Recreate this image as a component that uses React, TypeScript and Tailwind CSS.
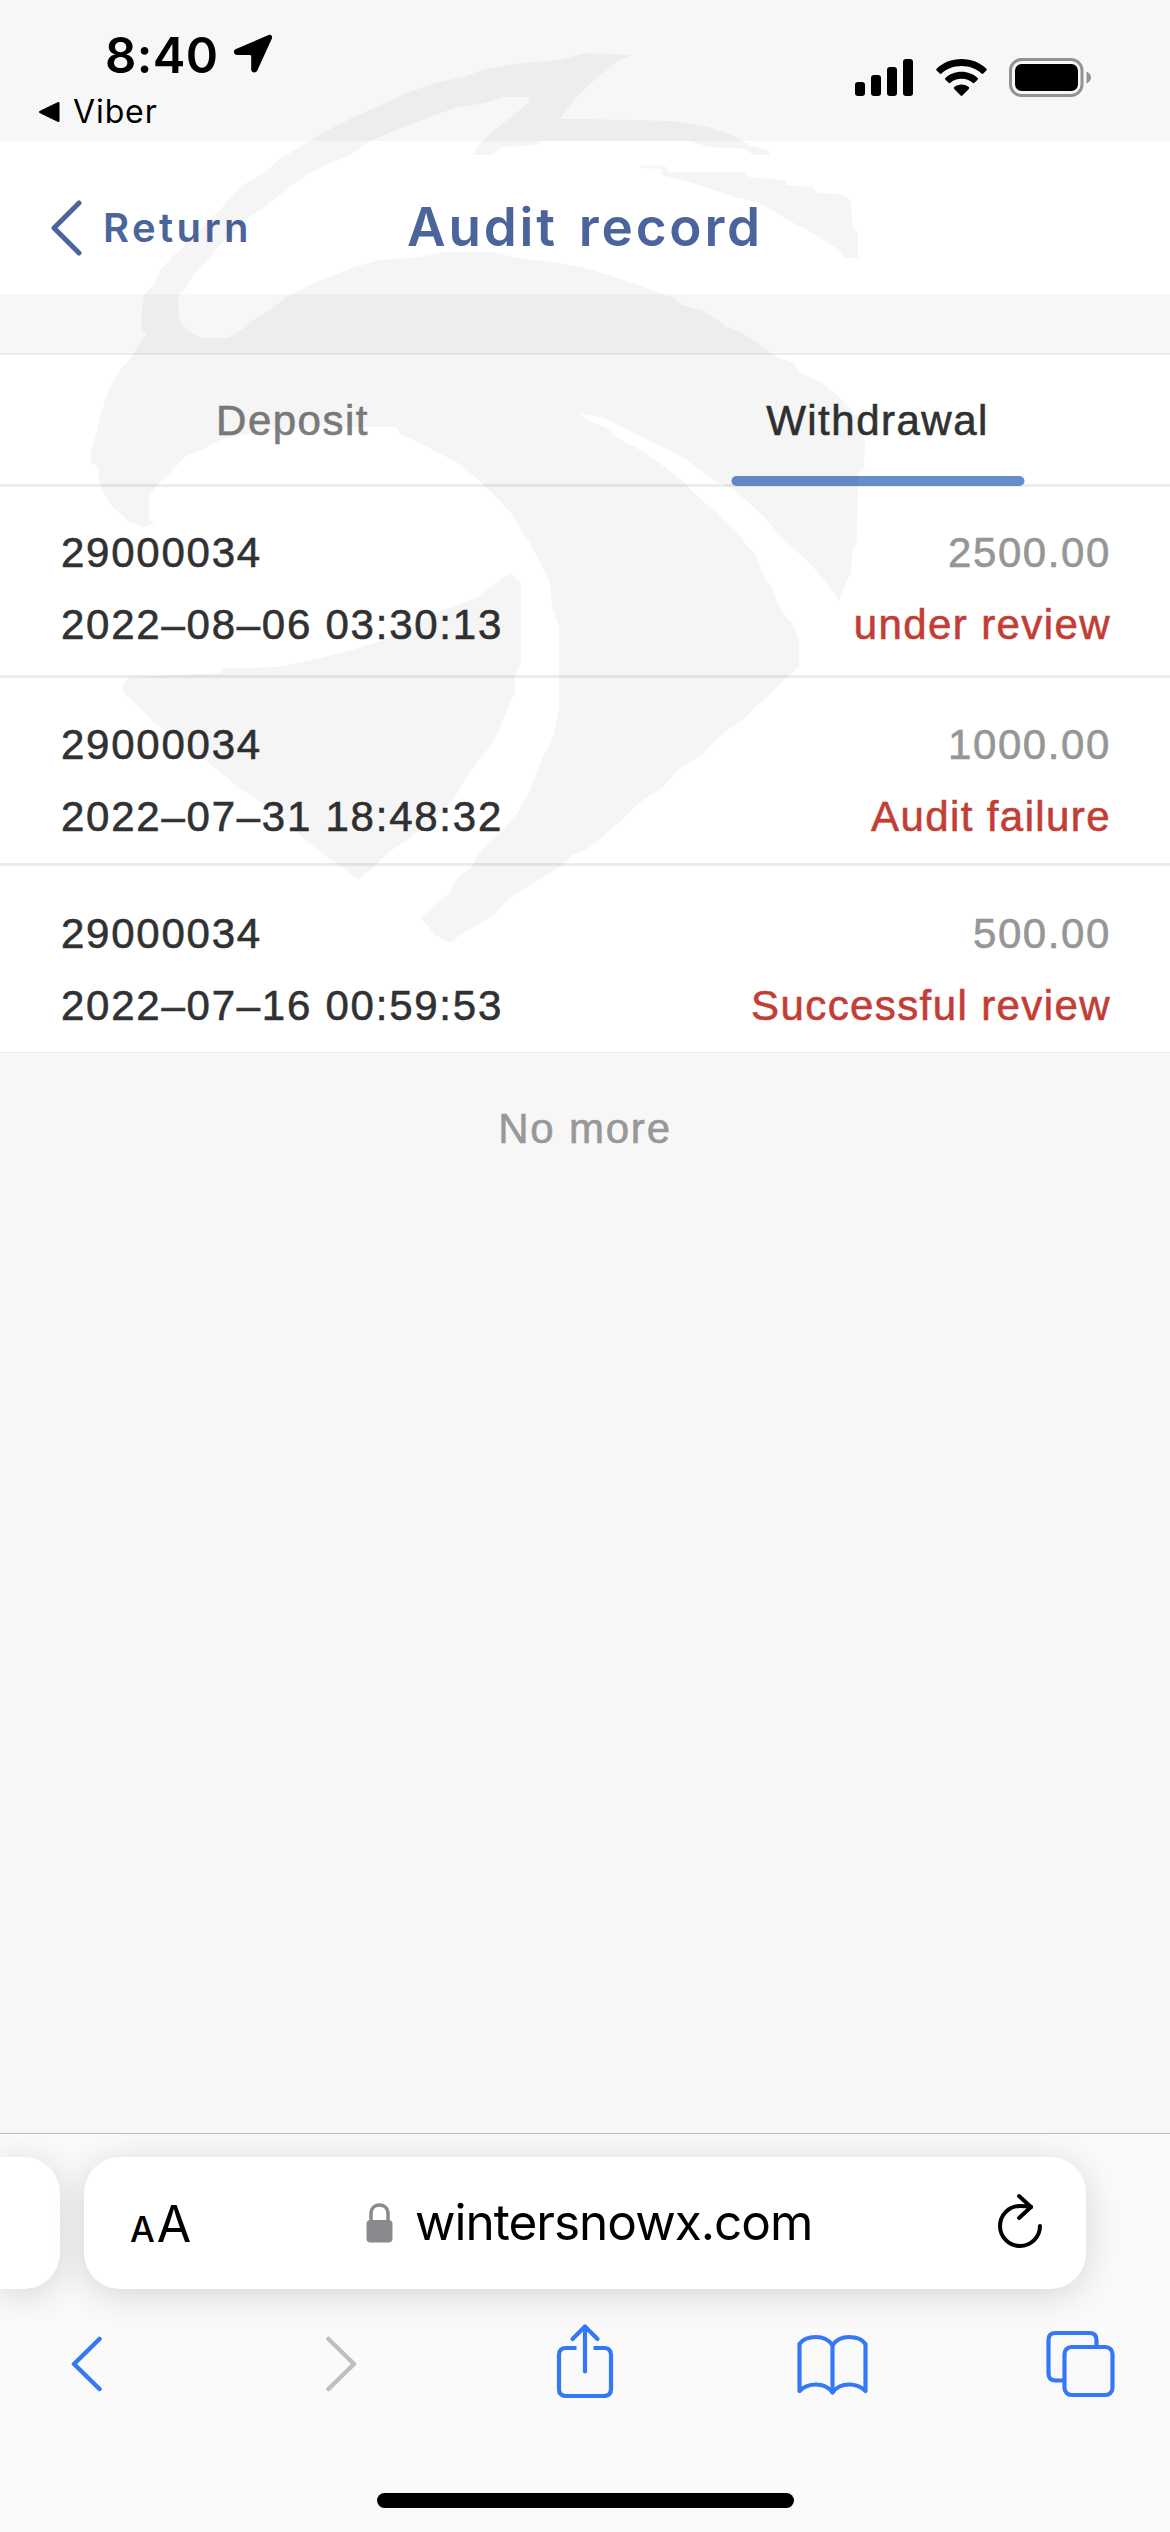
import clsx from "clsx";

const records = [
  { id: "29000034", time: "2022–08–06 03:30:13", amount: "2500.00", status: "under review" },
  { id: "29000034", time: "2022–07–31 18:48:32", amount: "1000.00", status: "Audit failure" },
  { id: "29000034", time: "2022–07–16 00:59:53", amount: "500.00", status: "Successful review" },
];

const tabs = ["Deposit", "Withdrawal"];

const StatusBar = () => (
  <div className="flex justify-between h-[141px] bg-[#f7f7f7] text-black">
    <div className="pt-[30px]">
      <div className="flex items-center gap-[14px] h-[50px] pl-[105px]">
        <span className="text-[49px] leading-none font-semibold tracking-[0.4px]">8:40</span>
        <svg width="40" height="40" viewBox="0 0 40 40" className="mb-[2px]">
          <path
            d="M35.6 1.1 C38 .2 39.8 2 38.9 4.400 L24.300 36.500 C23 39.500 18.200 39 18.200 35.400 V22.500 C18.200 21.600 17.600 21 16.700 21 H4.200 C.6 21 -.4 16.600 3 15.100 Z"
            fill="currentColor"
          />
        </svg>
      </div>
      <div className="flex items-center gap-[13px] h-10 mt-[12px] pl-[38px]">
        <svg width="22" height="22" viewBox="0 0 22 22">
          <path
            d="M20.500 2 V20 L2 11 Z"
            fill="currentColor"
            stroke="currentColor"
            strokeWidth="2"
            strokeLinejoin="round"
          />
        </svg>
        <span className="text-[32px] leading-none tracking-[0.9px]">Viber</span>
      </div>
    </div>

    <div className="flex items-start gap-[22px] pt-[58px] pr-[78px]">
      <svg width="59" height="39" viewBox="0 0 59 39" fill="currentColor">
        <rect x="0" y="24" width="10" height="14" rx="3" />
        <rect x="16" y="17" width="10" height="21" rx="3" />
        <rect x="32" y="9" width="10" height="29" rx="3" />
        <rect x="48" y="1" width="10" height="37" rx="3" />
      </svg>
      <svg width="51" height="39" viewBox="0 0 51 39" fill="currentColor">
        <path d="M25.500 1 C15.500 1 6.800 4.700 .6 10.700 Q-.2 11.600 .6 12.500 L3.700 15.600 Q4.600 16.300 5.500 15.600 C10.800 10.700 17.700 8 25.500 8 C33.300 8 40.200 10.700 45.500 15.600 Q46.400 16.300 47.300 15.600 L50.400 12.500 Q51.200 11.600 50.400 10.700 C44.200 4.700 35.500 1 25.500 1 Z" />
        <path d="M25.500 13.800 C19.200 13.800 13.600 16.100 9.400 19.900 Q8.500 20.800 9.400 21.700 L12.600 24.800 Q13.500 25.500 14.400 24.800 C17.300 22.200 21.200 20.700 25.500 20.700 C29.800 20.700 33.700 22.200 36.600 24.800 Q37.500 25.500 38.400 24.800 L41.600 21.700 Q42.500 20.800 41.600 19.900 C37.400 16.100 31.800 13.800 25.500 13.800 Z" />
        <path d="M25.500 26.500 C22.700 26.500 20.100 27.500 18.200 29.100 Q17.400 30 18.200 30.900 L24.600 37.400 Q25.500 38.200 26.400 37.400 L32.800 30.900 Q33.600 30 32.800 29.100 C30.900 27.500 28.300 26.500 25.500 26.500 Z" />
      </svg>
      <svg width="83" height="39" viewBox="0 0 83 39">
        <rect x="1.500" y="1.500" width="71.500" height="36" rx="11" fill="none" stroke="#929292" strokeWidth="3" />
        <rect x="6" y="6" width="63" height="27" rx="6.500" fill="currentColor" />
        <path d="M77.500 13.500 C80.500 15 82 17 82 19.500 C82 22 80.500 24 77.500 25.500 Z" fill="#929292" />
      </svg>
    </div>
  </div>
);

// translucent bird mark drawn over the whole page
const Watermark = () => (
  <svg
    className="absolute left-0 top-0 pointer-events-none"
    width="900"
    height="960"
    viewBox="0 0 900 960"
    fill="#000"
    fillOpacity="0.04"
  >
    <path
      d="M632 55 L585 53 L560 60 L522 63 L485 69 L463 77 L435 83 L409 92 L379 106 L358 115 L332 128 L306 143 L280 159 L265 172 L246 183 L231 197
      L220 210 L209 220 L198 233 L183 247 L172 257 L160 270 L155 283 L144 295 L142 310 L141 330 L147 333 L140 343 L134 353 L127 362 L120 370
      L112 383 L105 400 L101 413 L96 435 L91 450 L91 463 L98 467 L99 482 L106 497 L112 507 L120 513 L129 522 L144 527 L155 523 L149 520
      L149 497 L155 487 L168 475 L185 457 L205 448 L220 440 L260 431 L310 427 L397 427 L399 433 L412 439 L429 448 L448 458 L461 465 L478 480
      L489 490 L502 503 L511 513 L522 532 L530 543 L537 557 L544 570 L550 583 L552 607 L559 627 V710 L552 740 L543 757 L535 777 L529 793
      L519 810 L509 823 L500 833 L489 843 L478 855 L471 867 L456 880 L450 892 L433 907 L420 918 L427 925 L435 935 L450 943 L463 933 L481 923
      L496 913 L507 900 L528 887 L543 877 L560 867 L573 855 L585 850 L602 837 L622 820 L639 803 L663 787 L678 770 L704 753 L721 735 L745 718
      L757 705 L772 693 L783 680 L792 673 L799 667 V640 L792 623 L786 617 L777 603 L772 587 L764 577 L757 557 L745 543 L738 533 L725 522
      L717 513 L704 502 L691 490 L682 480 L665 467 L648 455 L632 445 L617 438 L607 428 L594 423 L578 413 L604 418 L624 428 L641 437 L669 450
      L684 458 L697 468 L719 483 L734 490 L749 503 L764 517 L775 530 L792 547 L809 563 L827 583 L839 602 L843 590 L851 573 L852 553 L857 540
      L858 473 L864 467 L865 443 L858 418 L846 403 L831 390 L822 383 L801 373 L792 362 L777 357 L764 347 L742 333 L727 327 L715 318 L702 310
      L682 305 L671 297 L652 290 L632 283 L609 275 L585 268 L560 263 L519 258 L492 252 H444 L420 257 L380 260 L354 267 L334 275 L313 283
      L285 298 L270 310 L257 317 L244 328 L228 338 H201 L187 330 L179 320 L178 297 L187 287 L192 277 L205 263 L218 248 L222 243 L239 227
      L248 218 L261 210 L276 198 L289 187 L310 173 L325 165 L347 157 L367 143 L395 130 L422 120 L455 108 L485 103 L504 97 H530 L528 103
      L511 117 L492 132 L481 142 L472 155 H492 L502 147 L537 145 L541 141 H690 L708 147 L745 149 L753 155 H770 L768 150 L749 145 L732 135
      L708 127 L674 121 L585 119 H560 L567 110 L577 97 L600 75 L615 63 Z"
    />
    <path
      d="M640 165 L665 166 L669 172 H745 L749 177 L785 180 L787 185 L813 187 L816 193 L842 194 L851 200 L852 227 L858 233 V258 H845 L839 250
      L813 233 L800 227 L772 210 L757 202 L734 197 L714 190 L689 182 L661 175 L663 169 L641 168 Z"
    />
    <path
      d="M511 573 L521 582 V662 L515 677 V693 L507 710 L500 727 L492 745 L478 760 L465 780 L455 797 L433 820 L410 838 L388 853 L373 868
      L358 880 L343 868 L328 858 L302 837 L280 813 L257 800 L239 788 L224 775 L205 760 L187 743 L153 723 L144 712 L129 698 L121 687 L129 677
      L220 673 L224 668 L278 667 L321 658 L351 650 L384 640 L410 625 L448 608 L478 597 L489 588 L504 577 Z"
    />
  </svg>
);

const NavBar = () => (
  <div className="flex items-center h-[153px] pt-[20px] bg-white text-[#4b659c]">
    <div className="flex-1 flex items-center gap-[21px] pl-[50px]">
      <svg width="32" height="56" viewBox="0 0 32 56" fill="none">
        <path d="M29 3 L4 28 L29 53" stroke="currentColor" strokeWidth="5" strokeLinecap="round" strokeLinejoin="round" />
      </svg>
      <span className="text-[40px] leading-none font-semibold tracking-[3.4px]">Return</span>
    </div>
    <h1 className="text-[53px] leading-none font-semibold tracking-[2.8px] [word-spacing:5px]">Audit record</h1>
    <div className="flex-1 pr-[50px]" />
  </div>
);

const SafariBar = () => (
  <div className="h-[399px] flex flex-col bg-[#fafafa] border-t border-[#bcbcbc] overflow-hidden">
    <div className="flex gap-6 mt-[23px] h-[132px]">
      <div className="w-[60px] rounded-r-[36px] bg-white shadow-[0_6px_36px_rgba(0,0,0,0.15)]" />
      <div className="w-[1002px] flex items-center justify-between pl-[46px] pr-[43px] rounded-[36px] bg-white text-black shadow-[0_6px_36px_rgba(0,0,0,0.15)]">
        <div className="flex items-baseline gap-[2px] mt-[6px] leading-[60px]">
          <span className="text-[35px] font-medium">A</span>
          <span className="text-[50px]">A</span>
        </div>
        <div className="flex items-center gap-[22px] mr-[10px]">
          <svg width="27" height="40" viewBox="0 0 27 40">
            <path d="M5 18 V11 C5 5.500 8.500 2 13.500 2 C18.500 2 22 5.500 22 11 V18" fill="none" stroke="#8a8a8e" strokeWidth="3.500" />
            <rect x=".5" y="17" width="26" height="22.500" rx="4" fill="#8a8a8e" />
          </svg>
          <span className="text-[49.5px] leading-none tracking-[-1px]">wintersnowx.com</span>
        </div>
        <svg width="46" height="56" viewBox="0 0 46 56" fill="none" stroke="currentColor" strokeWidth="4" strokeLinecap="round" strokeLinejoin="round" className="overflow-visible">
          <path d="M43 31 A20 20 0 1 1 23 11 Q29 11 34 12" />
          <path d="M22 1 L34 12 L22 23" />
        </svg>
      </div>
    </div>

    <div className="flex items-center h-20 mt-[31px] pl-[70px] text-[#3478f6]">
      <svg width="32" height="56" viewBox="0 0 32 56" fill="none" className="mt-[8px]">
        <path d="M29.500 3 L4 28 L29.500 53" stroke="currentColor" strokeWidth="4.500" strokeLinecap="round" strokeLinejoin="round" />
      </svg>
      <svg width="32" height="56" viewBox="0 0 32 56" fill="none" className="ml-[224px] mt-[8px]">
        <path d="M2.500 3 L28 28 L2.500 53" stroke="#bfbfbf" strokeWidth="4.500" strokeLinecap="round" strokeLinejoin="round" />
      </svg>
      <svg width="58" height="76" viewBox="0 0 58 76" fill="none" stroke="currentColor" strokeWidth="4.200" className="ml-[198px]">
        <path d="M20.500 26 H10 Q3 26 3 33 V67 Q3 74 10 74 H48 Q55 74 55 67 V33 Q55 26 48 26 H37.500" />
        <path d="M29 4.500 V49.500 M16.500 17 L29 4.500 L41.500 17" strokeLinecap="round" strokeLinejoin="round" />
      </svg>
      <svg width="73" height="62" viewBox="0 0 73 62" fill="none" stroke="currentColor" strokeWidth="4.200" strokeLinecap="round" strokeLinejoin="round" className="ml-[182px] mt-[9px]">
        <path d="M36.500 11 C32.500 5.500 26.500 3 20 3 C13 3 6.500 5.500 3.500 10 V57 C7.500 53 13.500 50.500 20 50.500 C26.500 50.500 32.500 53 36.500 58.500 C40.500 53 46.500 50.500 53 50.500 C59.500 50.500 65.500 53 69.500 57 V10 C66.500 5.500 60 3 53 3 C46.500 3 40.500 5.500 36.500 11 Z" />
        <path d="M36.500 11 V58" />
      </svg>
      <svg width="70" height="68" viewBox="0 0 70 68" fill="none" stroke="currentColor" strokeWidth="4.200" className="ml-[177px] mt-[8px]">
        <path d="M18.500 50.500 H9.500 Q2.500 50.500 2.500 43.500 V10 Q2.500 3 9.500 3 H43.500 Q50.500 3 50.500 10 V17" />
        <rect x="18.500" y="17" width="48" height="48" rx="7" />
      </svg>
    </div>

    <div className="w-[417px] h-[15px] mt-[93px] ml-[377px] rounded-full bg-black" />
  </div>
);

const App = () => {
  const activeTab = "Withdrawal";

  return (
    <div className="relative flex flex-col w-[1170px] h-[2532px] bg-[#f7f7f7] overflow-hidden font-['Inter','Liberation_Sans',sans-serif]">
      <StatusBar />
      <NavBar />

      <div className="flex h-[134px] mt-[59px] border-t-2 border-b-[3px] border-[#ededed] bg-white font-['Liberation_Sans',sans-serif] [-webkit-text-stroke:0.6px]">
        {tabs.map((tab) => (
          <div
            key={tab}
            className={clsx(
              "relative flex-1 flex items-center justify-center pt-[2px] text-[42px] leading-none tracking-[1.5px]",
              tab === activeTab ? "text-[#303133]" : "text-[#7d7d7d]",
            )}
          >
            {tab}
            {tab === activeTab && (
              <span className="absolute left-1/2 -translate-x-1/2 -bottom-[2px] w-[293px] h-[10px] rounded-full bg-[#668ec9]" />
            )}
          </div>
        ))}
      </div>

      <div className="bg-white text-[42px] leading-[72px] font-['Liberation_Sans',sans-serif] [-webkit-text-stroke:0.6px]">
        {records.map((record, i) => (
          <div
            key={i}
            className="flex justify-between h-[188px] first:h-[191px] last:h-[187px] pt-[31px] first:pt-[30px] last:pt-[32px] pl-[61px] pr-[59px] border-b-[3px] last:border-b border-[#ececec]"
          >
            <div className="text-[#303133] tracking-[1.75px]">
              <p>{record.id}</p>
              <p>{record.time}</p>
            </div>
            <div className="text-right">
              <p className="text-[#969696] tracking-[1.6px]">{record.amount}</p>
              <p className="text-[#c33d35] tracking-[1.4px]">{record.status}</p>
            </div>
          </div>
        ))}
      </div>

      <p className="flex-1 pt-[40px] text-center text-[42px] leading-[72px] tracking-[1.8px] text-[#989898] font-['Liberation_Sans',sans-serif] [-webkit-text-stroke:0.6px]">
        No more
      </p>

      <SafariBar />
      <Watermark />
    </div>
  );
};

export default App;
